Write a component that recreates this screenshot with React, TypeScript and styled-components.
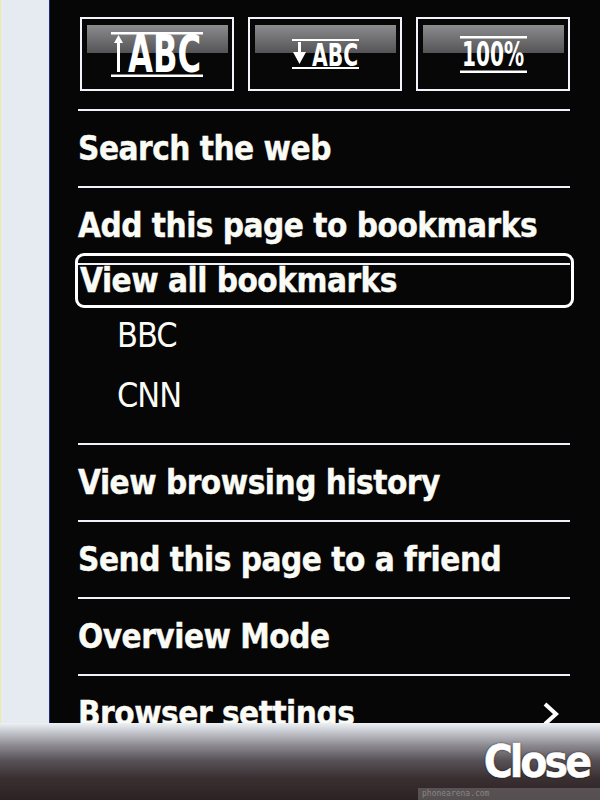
import React from "react";
import styled, { createGlobalStyle } from "styled-components";

const GlobalStyle = createGlobalStyle`
  html, body { margin: 0; padding: 0; background: #060606; }
  body { font-family: "DejaVu Sans Condensed", "DejaVu Sans", sans-serif; }
`;

const Screen = styled.div`
  width: 600px;
  height: 800px;
  overflow: hidden;
  display: flex;
  flex-direction: column;
`;

const Body = styled.div`
  height: 723px;
  flex: none;
  display: flex;
  overflow: hidden;
`;

const SideStrip = styled.div`
  width: 49px;
  flex: none;
  background: #e5ebf1;
  border-right: 1px solid #1b2a86;
  box-shadow: inset 1px 0 0 #eeeaa0;
`;

const Panel = styled.div`
  flex: 1;
  background: #060606;
  padding: 17px 30px 0 28px;
  display: flex;
  flex-direction: column;
  color: #fbfbf6;
`;

const ToolRow = styled.div`
  display: grid;
  grid-template-columns: repeat(3, 1fr);
  column-gap: 14px;
  height: 74px;
  margin-left: 2px;
  flex: none;
`;

const ToolButton = styled.div`
  box-sizing: border-box;
  border: 2px solid #f3f3fb;
  background: linear-gradient(#8c8c8e, #6a6a6c 60%, #545456) no-repeat 5px 6px / calc(100% - 9px) 28px, #070707;
  display: flex;
  align-items: center;
  justify-content: center;
`;

const IconSvg = styled.svg`
  display: block;
  overflow: visible;
`;

const Divider = styled.div<{ $top?: number }>`
  height: 2px;
  flex: none;
  background: #f1f1fa;
  margin-top: ${(p) => p.$top ?? 0}px;
`;

const MenuItem = styled.div`
  height: 75px;
  flex: none;
  line-height: 75px;
  font-size: 33px;
  font-weight: bold;
  letter-spacing: -0.5px;
  -webkit-text-stroke: 0.4px #fbfbf6;
  white-space: nowrap;
  display: flex;
  align-items: center;
  justify-content: space-between;
`;

const BookmarkGroup = styled.div`
  height: 178px;
  flex: none;
  display: flex;
  flex-direction: column;
`;

const FocusItem = styled.div`
  box-sizing: border-box;
  height: 55px;
  margin: -12px -4px 0 -3px;
  border: 3px solid #ffffff;
  border-radius: 9px;
  padding-left: 2px;
  line-height: 49px;
  font-size: 33px;
  font-weight: bold;
  letter-spacing: -0.5px;
  -webkit-text-stroke: 0.4px #fbfbf6;
  white-space: nowrap;
`;

const SubItem = styled.div<{ $first?: boolean }>`
  height: 60px;
  line-height: 60px;
  padding-left: 39px;
  font-size: 34px;
  font-weight: normal;
  letter-spacing: -1px;
  margin-top: ${(p) => (p.$first ? -3 : 0)}px;
`;

const Chevron = styled.svg`
  width: 18px;
  height: 26px;
  margin-right: 10px;
  flex: none;
`;

const SoftBar = styled.div`
  height: 77px;
  flex: none;
  position: relative;
  box-sizing: border-box;
  padding: 13px 11px 0 0;
  display: flex;
  justify-content: flex-end;
  background: linear-gradient(
    #eef1f4 0px,
    #c9ccd2 8px,
    #8e8c92 22px,
    #565056 38px,
    #3a3032 55px,
    #2c2224 77px
  );
`;

const CloseLabel = styled.span`
  font-size: 44px;
  line-height: 51px;
  font-weight: bold;
  letter-spacing: -3px;
  color: #ffffff;
  -webkit-text-stroke: 0.5px #fff;
  text-shadow: 0 0 2px #000;
`;

const Credit = styled.span`
  position: absolute;
  right: 0;
  bottom: 0;
  width: 182px;
  height: 12px;
  background: rgba(120, 116, 118, 0.55);
  font-family: "DejaVu Sans Mono", monospace;
  font-size: 8px;
  line-height: 12px;
  color: rgba(200, 200, 200, 0.45);
  padding-left: 4px;
  box-sizing: border-box;
`;

const IconFont = "'DejaVu Sans Condensed', 'DejaVu Sans', sans-serif";

const IncreaseIcon = () => (
  <IconSvg width="92" height="45" viewBox="0 0 92 45">
    <rect x="0" y="0" width="92" height="2.5" fill="#fff" />
    <rect x="0" y="42.5" width="92" height="2.5" fill="#fff" />
    <path d="M7.5 3 L3 11 L12 11 Z" fill="#fff" />
    <rect x="6" y="10" width="3" height="30" fill="#fff" />
    <text x="17" y="40" fontFamily={IconFont} fontWeight="bold" fontSize="51" fill="#fff" textLength="73" lengthAdjust="spacingAndGlyphs">
      ABC
    </text>
  </IconSvg>
);

const DecreaseIcon = () => (
  <IconSvg width="67" height="30" viewBox="0 0 67 30">
    <rect x="0" y="0" width="67" height="2" fill="#fff" />
    <rect x="0" y="28" width="67" height="2" fill="#fff" />
    <rect x="6" y="3" width="3" height="12" fill="#fff" />
    <path d="M1 13 L14 13 L7.5 25 Z" fill="#fff" />
    <text x="20" y="27" fontFamily={IconFont} fontWeight="bold" fontSize="32" fill="#fff" textLength="46" lengthAdjust="spacingAndGlyphs">
      ABC
    </text>
  </IconSvg>
);

const ZoomIcon = () => (
  <IconSvg width="67" height="37" viewBox="0 0 67 37">
    <rect x="0" y="0" width="67" height="2.5" fill="#fff" />
    <rect x="0" y="34.5" width="67" height="2.5" fill="#fff" />
    <text x="2" y="30" fontFamily={IconFont} fontWeight="bold" fontSize="34" fill="#fff" textLength="62" lengthAdjust="spacingAndGlyphs">
      100%
    </text>
  </IconSvg>
);

export default function App() {
  return (
    <>
      <GlobalStyle />
      <Screen>
        <Body>
          <SideStrip />
          <Panel>
            <ToolRow>
              <ToolButton>
                <IncreaseIcon />
              </ToolButton>
              <ToolButton>
                <DecreaseIcon />
              </ToolButton>
              <ToolButton>
                <ZoomIcon />
              </ToolButton>
            </ToolRow>
            <Divider $top={18} />
            <MenuItem>Search the web</MenuItem>
            <Divider />
            <MenuItem>Add this page to bookmarks</MenuItem>
            <Divider />
            <BookmarkGroup>
              <FocusItem>View all bookmarks</FocusItem>
              <SubItem $first>BBC</SubItem>
              <SubItem>CNN</SubItem>
            </BookmarkGroup>
            <Divider />
            <MenuItem>View browsing history</MenuItem>
            <Divider />
            <MenuItem>Send this page to a friend</MenuItem>
            <Divider />
            <MenuItem>Overview Mode</MenuItem>
            <Divider />
            <MenuItem>
              Browser settings
              <Chevron viewBox="0 0 18 26">
                <path d="M3 3 L14 13 L3 23" fill="none" stroke="#fff" strokeWidth="4" />
              </Chevron>
            </MenuItem>
          </Panel>
        </Body>
        <SoftBar>
          <CloseLabel>Close</CloseLabel>
          <Credit>phonearena.com</Credit>
        </SoftBar>
      </Screen>
    </>
  );
}
